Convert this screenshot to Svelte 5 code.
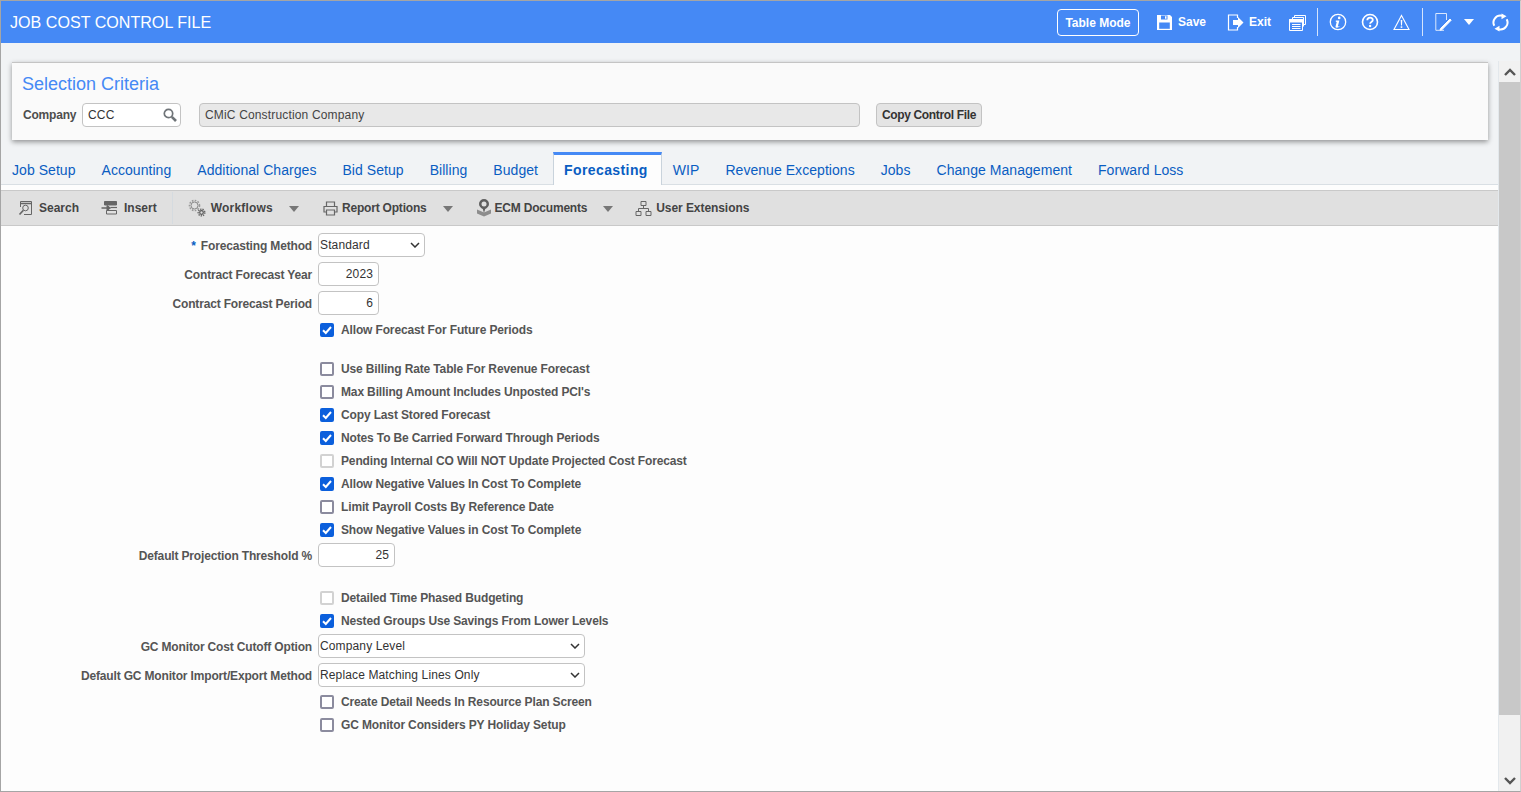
<script lang="ts">
  const tabs = ['Job Setup', 'Accounting', 'Additional Charges', 'Bid Setup', 'Billing', 'Budget', 'Forecasting', 'WIP', 'Revenue Exceptions', 'Jobs', 'Change Management', 'Forward Loss'];

  const rows = [
    { type: 'select', label: 'Forecasting Method', required: true, value: 'Standard', size: 'sm' },
    { type: 'number', label: 'Contract Forecast Year', value: '2023', size: 'sm' },
    { type: 'number', label: 'Contract Forecast Period', value: '6', size: 'sm' },
    { type: 'check', text: 'Allow Forecast For Future Periods', checked: true },
    { type: 'gap' },
    { type: 'check', text: 'Use Billing Rate Table For Revenue Forecast' },
    { type: 'check', text: "Max Billing Amount Includes Unposted PCI's" },
    { type: 'check', text: 'Copy Last Stored Forecast', checked: true },
    { type: 'check', text: 'Notes To Be Carried Forward Through Periods', checked: true },
    { type: 'check', text: 'Pending Internal CO Will NOT Update Projected Cost Forecast', disabled: true },
    { type: 'check', text: 'Allow Negative Values In Cost To Complete', checked: true },
    { type: 'check', text: 'Limit Payroll Costs By Reference Date' },
    { type: 'check', text: 'Show Negative Values in Cost To Complete', checked: true },
    { type: 'number', label: 'Default Projection Threshold %', value: '25', size: 'md' },
    { type: 'gap' },
    { type: 'check', text: 'Detailed Time Phased Budgeting', disabled: true },
    { type: 'check', text: 'Nested Groups Use Savings From Lower Levels', checked: true },
    { type: 'select', label: 'GC Monitor Cost Cutoff Option', value: 'Company Level', size: 'lg' },
    { type: 'select', label: 'Default GC Monitor Import/Export Method', value: 'Replace Matching Lines Only', size: 'lg' },
    { type: 'check', text: 'Create Detail Needs In Resource Plan Screen' },
    { type: 'check', text: 'GC Monitor Considers PY Holiday Setup' },
  ];
</script>

<div class="app">
  <header class="topbar">
    <div class="title">JOB COST CONTROL FILE</div>
    <div class="actions">
      <button class="mode">Table Mode</button>
      <span class="action save">
        <svg width="17" height="17" viewBox="0 0 17 17"><path d="M1 1h13l2 2v13H1z" fill="#fff"/><path d="M5 1.500h6.500v4H5z" fill="#4589f5"/><path d="M9 2.200h1.500v2.600H9z" fill="#fff"/><path d="M3.200 8.500h10.600v6.300H3.200z" fill="#4589f5"/></svg>
        Save
      </span>
      <span class="action exit">
        <svg width="17" height="17" viewBox="0 0 17 17"><path d="M10.500 4V1H1.500v15h9v-3" fill="none" stroke="#fff" stroke-width="1.200"/><path d="M6 6h5V3l5.500 5.500L11 14v-3H6z" fill="#fff"/></svg>
        Exit
      </span>
      <svg class="ico windows" width="17" height="17" viewBox="0 0 17 17" fill="none" stroke="#fff"><path d="M5.500 3.500V1.500h11v9h-2"/><path d="M3.500 5.500V3.500h11v9"/><path d="M.5 5.500h13v11H.5z" fill="#4589f5"/><path d="M.5 5.500h13v2.500H.5z" fill="#fff"/><path d="M3 10.500h8.500M3 12.500h8.500M3 14.500h8.500"/></svg>
      <span class="divider first"></span>
      <svg class="ico info" width="18" height="18" viewBox="0 0 18 18"><circle cx="9" cy="9" r="7.700" fill="none" stroke="#fff" stroke-width="1.300"/><circle cx="10.200" cy="4.900" r="1.300" fill="#fff"/><path d="M6.800 7.400h3.600l-1.500 5.500q-.1.600.5.500l1-.4v.8q-1.500 1-3 1-1.100-.1-.9-1.200l1.200-4.700-.9-.1z" fill="#fff"/></svg>
      <svg class="ico help" width="18" height="18" viewBox="0 0 18 18"><circle cx="9" cy="9" r="7.500" fill="none" stroke="#fff" stroke-width="1.600"/><path d="M6.300 7.200c0-3.400 5.500-3.400 5.500-.2 0 2-2.700 2-2.700 3.800" fill="none" stroke="#fff" stroke-width="1.800"/><circle cx="9.100" cy="13" r="1.200" fill="#fff"/></svg>
      <svg class="ico warn" width="17" height="17" viewBox="0 0 17 17"><path d="M8.500 1.500 16 15.500H1z" fill="none" stroke="#fff" stroke-width="1.100"/><path d="M7.700 6h1.600l-.3 5.500H8z" fill="#fff"/><path d="M7.700 12.300h1.600v1.600H7.700z" fill="#fff"/></svg>
      <span class="divider second"></span>
      <svg class="ico note" width="17" height="18" viewBox="0 0 17 18" fill="none" stroke="#fff"><path d="M11.500 7V.5H.8v16.800h8.200" stroke-opacity=".8"/><path d="M5.500 15.500 15 6l1.200 1.200L6.800 16.800l-1.800.4z" fill="#fff"/></svg>
      <span class="caret"></span>
      <svg class="ico refresh" width="17" height="17" viewBox="0 0 17 17" fill="none" stroke="#fff" stroke-width="2"><path d="M2.300 11.800A7 7 0 0 1 10 1.700"/><path d="M14.700 5.200A7 7 0 0 1 7 15.300"/><path d="M9.500-.5l5 2.800-5 3z" fill="#fff" stroke="none"/><path d="M7.500 17.500l-5-2.800 5-3z" fill="#fff" stroke="none"/></svg>
    </div>
  </header>

  <div class="body">
    <div class="main">
      <section class="criteria">
        <h2>Selection Criteria</h2>
        <div class="criteria-row">
          <span class="company-label">Company</span>
          <div class="lookup">
            <span>CCC</span>
            <svg width="14" height="14" viewBox="0 0 14 14" fill="none" stroke="#6f7478"><circle cx="5.500" cy="5.500" r="4.200" stroke-width="1.700"/><path d="M8.800 8.800 13 13" stroke-width="2.600"/></svg>
          </div>
          <div class="company-name">CMiC Construction Company</div>
          <button class="copy">Copy Control File</button>
        </div>
      </section>

      <nav class="tabs">
        {#each tabs as tab}
          <span class="tab" class:active={tab === 'Forecasting'}>{tab}</span>
        {/each}
      </nav>

      <div class="content">
        <div class="toolbar">
          <span class="tool">
            <svg width="16" height="16" viewBox="0 0 16 16" fill="none" stroke="#666"><path d="M2.500 7V1.500h11v13H6"/><path d="M2.500 3.500h11" stroke-width="1.500"/><circle cx="7.500" cy="8" r="2.800"/><path d="M5.400 10.200 1.500 14.500" stroke-width="1.700"/></svg>
            Search
          </span>
          <span class="tool insert">
            <svg width="17" height="16" viewBox="0 0 17 16" fill="none" stroke="#666"><path d="M3.500 1.500h12v3.500h-12z" fill="#666"/><path d="M5.500 10.500h10v3.500h-10z"/><path d="M.5 8h6" stroke-width="1.500"/><path d="M6 5.500 9.500 8 6 10.500z" fill="#666"/><path d="M9.500 7.500h6.500" stroke-width="1.200"/></svg>
            Insert
          </span>
          <span class="sep"></span>
          <span class="tool workflows">
            <svg width="18" height="18" viewBox="0 0 18 18" fill="none"><circle cx="6.500" cy="6.500" r="3.500" stroke="#8a8a8a"/><circle cx="6.500" cy="6.500" r="5" stroke="#9a9a9a" stroke-width="1.600" stroke-dasharray="1.600 1.300"/><circle cx="13.500" cy="13.500" r="1.800" stroke="#555" stroke-width="1.200"/><circle cx="13.500" cy="13.500" r="3.300" stroke="#666" stroke-width="1.500" stroke-dasharray="1.300 1"/></svg>
            <span class="wide">Workflows</span>
          </span>
          <span class="tri"></span>
          <span class="tool report">
            <svg width="15" height="15" viewBox="0 0 15 15" fill="none" stroke="#666" stroke-width="1.200"><path d="M3.500 5V1h8v4"/><path d="M3.500 11H1V5.500h13V11h-2.500"/><path d="M3.500 9h8v5h-8z"/></svg>
            <span class="tight">Report Options</span>
          </span>
          <span class="tri"></span>
          <span class="tool ecm">
            <svg width="16" height="18" viewBox="0 0 16 18"><path d="M1 10.500l7 3 7-3v4l-7 3-7-3z" fill="#8d8d8d"/><path d="M8 0a5 5 0 0 1 5 5c0 2.500-2 4-3.800 5L8 14 6.800 10C5 9 3 7.500 3 5a5 5 0 0 1 5-5z" fill="#5f5f5f"/><circle cx="8" cy="5" r="2.500" fill="#e0e0e0"/></svg>
            <span class="tight">ECM Documents</span>
          </span>
          <span class="tri"></span>
          <span class="tool ext">
            <svg width="17" height="17" viewBox="0 0 17 17" fill="none" stroke="#666"><path d="M6 1.500h5v4H6zM1 11.500h5v4H1zM11 11.500h5v4h-5z"/><path d="M8.500 5.500V8.500M3.500 11.500v-3h10v3"/></svg>
            User Extensions
          </span>
        </div>

        <form class="form">
          {#each rows as row}
            {#if row.type === 'gap'}
              <div class="gap"></div>
            {:else if row.type === 'check'}
              <div class="check-row">
                <span class="box" class:checked={row.checked} class:disabled={row.disabled}>
                  {#if row.checked}
                    <svg width="14" height="14" viewBox="0 0 14 14" fill="none" stroke="#fff" stroke-width="2"><path d="M3 7.200 5.800 10 11 4"/></svg>
                  {/if}
                </span>
                <span class="check-text">{row.text}</span>
              </div>
            {:else}
              <div class="field-row">
                <span class="field-label">
                  {#if row.required}<span class="req">*</span>{/if}
                  {row.label}
                </span>
                {#if row.type === 'select'}
                  <div class="select {row.size}">
                    <span>{row.value}</span>
                    <svg width="10" height="6" viewBox="0 0 10 6" fill="none" stroke="#333" stroke-width="1.500"><path d="M1 1l4 4 4-4"/></svg>
                  </div>
                {:else}
                  <div class="number {row.size}">{row.value}</div>
                {/if}
              </div>
            {/if}
          {/each}
        </form>
      </div>
    </div>

    <aside class="scrollbar">
      <div class="arrow">
        <svg width="12" height="8" viewBox="0 0 12 8" fill="none" stroke="#555" stroke-width="2.400"><path d="M1 7l5-5 5 5"/></svg>
      </div>
      <div class="thumb"></div>
      <div class="track"></div>
      <div class="arrow">
        <svg width="12" height="8" viewBox="0 0 12 8" fill="none" stroke="#555" stroke-width="2.400"><path d="M1 1l5 5 5-5"/></svg>
      </div>
    </aside>
  </div>
</div>

<style>
  :global(body) {
    margin: 0;
    font-family: "Liberation Sans", Arial, sans-serif;
  }

  .app {
    width: 1521px;
    height: 792px;
    box-sizing: border-box;
    border: 1px solid #a5a5a5;
    border-right-color: #d0d0d0;
    display: flex;
    flex-direction: column;
    background: #f1f3f5;
    overflow: hidden;
  }

  .topbar {
    height: 42px;
    flex: none;
    background: #4589f5;
    color: #fff;
    display: flex;
    align-items: center;
    justify-content: space-between;
    padding-left: 9px;
  }

  .title {
    font-size: 16.100px;
  }

  .actions {
    display: flex;
    align-items: center;
    font-size: 12px;
    font-weight: bold;
  }

  .mode {
    width: 82px;
    height: 27px;
    padding: 1px 0 0;
    box-sizing: border-box;
    border: 1px solid #fff;
    border-radius: 4px;
    background: transparent;
    color: #fff;
    font: bold 12px "Liberation Sans", Arial, sans-serif;
  }

  .action {
    display: flex;
    align-items: center;
    gap: 5px;
  }

  .save { margin-left: 17px; }
  .exit { margin-left: 21px; }
  .ico { display: block; flex: none; overflow: visible; }
  .windows { margin-left: 18px; }

  .divider {
    width: 1px;
    height: 28px;
    background: #d5e4fc;
  }

  .divider.first { margin-left: 11px; }
  .info { margin-left: 11px; }
  .help { margin-left: 14px; }
  .warn { margin-left: 14px; }
  .divider.second { margin-left: 12px; }
  .note { margin-left: 12px; }

  .caret {
    margin-left: 12px;
    border-left: 5px solid transparent;
    border-right: 5px solid transparent;
    border-top: 6px solid #fff;
  }

  .refresh { margin: 0 11px 0 18px; }

  .body {
    flex: 1;
    min-height: 0;
    display: flex;
  }

  .main {
    flex: 1;
    min-width: 0;
    display: flex;
    flex-direction: column;
  }

  .criteria {
    height: 78px;
    flex: none;
    box-sizing: border-box;
    margin: 19px 11px 0 11px;
    padding: 11px 10px 0;
    background: #fafafa;
    border-top: 1px solid #c4c4c4;
    box-shadow: 0 2px 5px rgba(0, 0, 0, 0.4);
  }

  .criteria h2 {
    margin: 0;
    font-size: 18px;
    font-weight: normal;
    line-height: 21px;
    color: #4589f5;
  }

  .criteria-row {
    display: flex;
    align-items: center;
    margin: 8px 0 0 1px;
  }

  .company-label {
    font-size: 12px;
    letter-spacing: -0.2px;
    font-weight: bold;
    color: #4d4d4d;
    width: 59px;
    flex: none;
  }

  .lookup {
    width: 99px;
    height: 24px;
    box-sizing: border-box;
    display: flex;
    align-items: center;
    justify-content: space-between;
    padding: 0 3px 0 5px;
    background: #fff;
    border: 1px solid #c3c3c3;
    border-radius: 4px;
    font-size: 12px;
    letter-spacing: 0.15px;
    color: #333;
  }

  .company-name {
    width: 661px;
    height: 24px;
    box-sizing: border-box;
    margin-left: 18px;
    padding-left: 5px;
    background: #e8e8e8;
    border: 1px solid #c3c3c3;
    border-radius: 4px;
    font-size: 12px;
    line-height: 22px;
    letter-spacing: 0.16px;
    color: #444;
  }

  .copy {
    width: 106px;
    height: 24px;
    padding: 0;
    margin-left: 16px;
    background: #e4e4e4;
    border: 1px solid #c3c3c3;
    border-radius: 4px;
    font: bold 12px "Liberation Sans", Arial, sans-serif;
    letter-spacing: -0.35px;
    color: #333;
  }

  .tabs {
    height: 33px;
    flex: none;
    margin-top: 12px;
    display: flex;
    align-items: stretch;
    border-bottom: 1px solid #d9dfe4;
    box-sizing: border-box;
  }

  .tab {
    padding: 4px 11px 0;
    margin-right: 4px;
    font-size: 14px;
    line-height: 28px;
    letter-spacing: 0.05px;
    color: #0a5dc2;
    white-space: nowrap;
  }

  .tab.active {
    margin: 0 0 -1px;
    background: #fdfdfd;
    border-top: 3px solid #4589f5;
    border-left: 1px solid #c9d3dc;
    border-right: 1px solid #c9d3dc;
    padding: 1px 13px 0 10px;
    font-weight: bold;
    letter-spacing: 0.4px;
  }

  .content {
    flex: 1;
    min-height: 0;
    display: flex;
    flex-direction: column;
    padding-top: 5px;
    background: #fdfdfd;
  }

  .toolbar {
    height: 36px;
    flex: none;
    box-sizing: border-box;
    background: #e0e0e0;
    border-top: 1px solid #c9c9c9;
    border-bottom: 1px solid #c9c9c9;
    display: flex;
    align-items: center;
    padding-left: 17px;
    font-size: 12px;
    font-weight: bold;
    color: #444;
  }

  .tool {
    display: flex;
    align-items: center;
    gap: 5px;
    white-space: nowrap;
  }

  .tight { letter-spacing: -0.2px; }
  .wide { letter-spacing: 0.2px; }

  .insert { margin-left: 22px; gap: 6px; }

  .sep {
    width: 1px;
    height: 32px;
    margin: 0 15px 0 15px;
    background: #d5dbe0;
  }

  .tri {
    margin: 2px 0 0 16px;
    border-left: 5px solid transparent;
    border-right: 5px solid transparent;
    border-top: 6px solid #777;
  }

  .report { margin-left: 24px; gap: 4px; }
  .ecm { margin-left: 23px; gap: 3px; }
  .ext { margin-left: 22px; gap: 4px; letter-spacing: -0.07px; }

  .form {
    flex: 1;
    padding-top: 4px;
  }

  .gap { height: 16px; }

  .field-row {
    height: 29px;
    display: flex;
    align-items: center;
  }

  .field-label {
    width: 311px;
    flex: none;
    margin-top: 2px;
    text-align: right;
    font-size: 12px;
    letter-spacing: -0.16px;
    font-weight: bold;
    color: #555;
    white-space: nowrap;
  }

  .req { color: #0a5dc2; margin-right: 2px; }

  .select, .number {
    height: 24px;
    box-sizing: border-box;
    margin-left: 6px;
    background: #fff;
    border: 1px solid #c3c3c3;
    border-radius: 4px;
    font-size: 12px;
    letter-spacing: 0.13px;
    color: #333;
  }

  .select {
    display: flex;
    align-items: center;
    justify-content: space-between;
    padding: 0 4px 0 1px;
  }

  .select.sm { width: 107px; }
  .select.lg { width: 267px; }

  .number {
    line-height: 22px;
    text-align: right;
    padding-right: 5px;
  }

  .number.sm { width: 61px; }
  .number.md { width: 77px; }

  .check-row {
    height: 23px;
    box-sizing: border-box;
    display: flex;
    align-items: center;
    padding: 2px 0 0 319px;
  }

  .box {
    width: 14px;
    height: 14px;
    box-sizing: border-box;
    display: flex;
    border: 2px solid #8b8b9e;
    border-radius: 2px;
    background: #fff;
  }

  .box svg { margin: -2px; flex: none; }

  .box.checked {
    background: #0b5fdc;
    border-color: #0b5fdc;
  }

  .box.disabled { border-color: #d2d2d2; }

  .check-text {
    margin-left: 7px;
    font-size: 12px;
    letter-spacing: -0.14px;
    font-weight: bold;
    color: #555;
    white-space: nowrap;
  }

  .scrollbar {
    width: 21px;
    flex: none;
    margin-top: 18px;
    background: #f1f1f1;
    box-shadow: -1px 0 0 #e3e8ec;
    display: flex;
    flex-direction: column;
  }

  .arrow {
    height: 21px;
    flex: none;
    display: flex;
    align-items: center;
    justify-content: center;
  }

  .thumb {
    height: 633px;
    flex: none;
    background: #c8c8c8;
  }

  .track { flex: 1; }
</style>
